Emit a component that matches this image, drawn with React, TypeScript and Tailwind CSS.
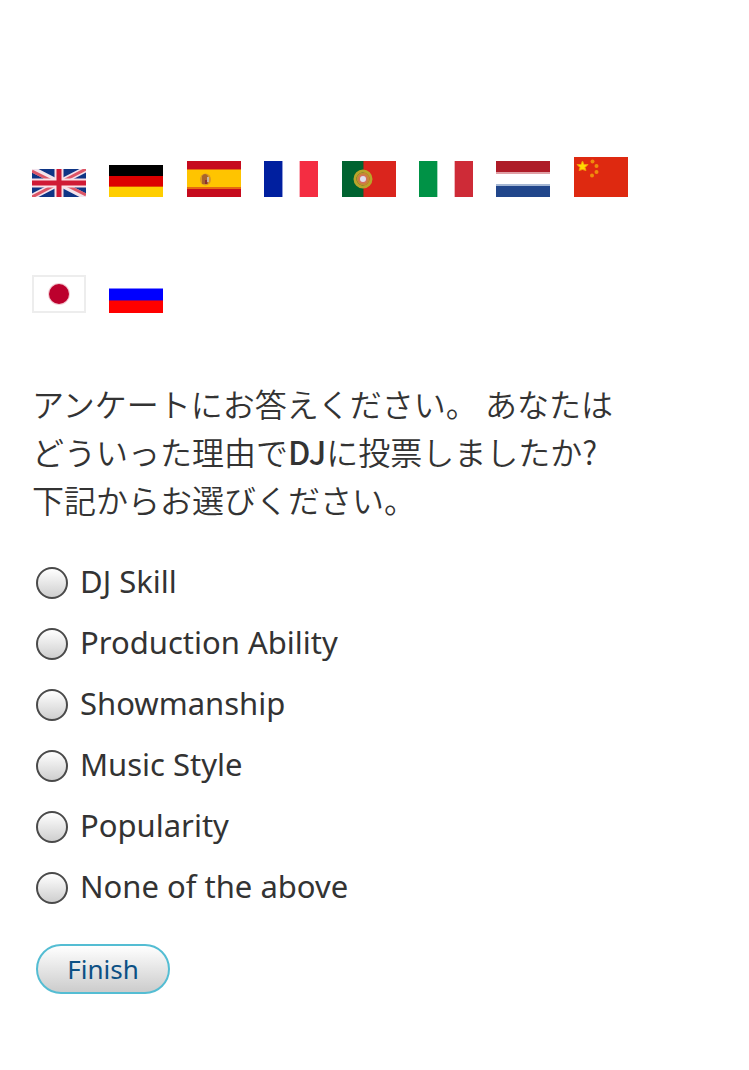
import type { ReactNode } from 'react';

const options = [
  'DJ Skill',
  'Production Ability',
  'Showmanship',
  'Music Style',
  'Popularity',
  'None of the above',
];

const flags: { name: string; height: number; art: ReactNode }[] = [
  {
    name: 'English',
    height: 28,
    art: (
      <>
        <rect width="54" height="28" fill="#0f3585" />
        <path d="M0 0 54 28M54 0 0 28" stroke="#f3e3ec" strokeWidth="6" />
        <path d="M0 2 20 12M54 26 34 16M54 0 33 11M0 28 21 17" stroke="#dc5566" strokeWidth="3" />
        <path d="M27 0V28M0 14H54" stroke="#fbe0e6" strokeWidth="9" />
        <path d="M27 0V28M0 14H54" stroke="#d01a35" strokeWidth="5" />
      </>
    ),
  },
  {
    name: 'Deutsch',
    height: 32,
    art: (
      <>
        <rect width="54" height="11" fill="#000" />
        <rect y="11" width="54" height="11" fill="#dd0000" />
        <rect y="21" width="54" height="1" fill="#e04a00" />
        <rect y="22" width="54" height="10" fill="#ffce00" />
      </>
    ),
  },
  {
    name: 'Español',
    height: 36,
    art: (
      <>
        <rect width="54" height="36" fill="#c60b1e" />
        <rect y="8" width="54" height="20" fill="#e66a10" />
        <rect y="9" width="54" height="17" fill="#ffc400" />
        <ellipse cx="18.5" cy="18.5" rx="5.5" ry="6" fill="#d99a22" />
        <path d="M15 15q3-4 6 0v8h-6z" fill="#a8642c" />
        <path d="M18 19h2v4h-2z" fill="#8a3030" />
        <path d="M20 16h2v5h-2z" fill="#cdb6a0" />
      </>
    ),
  },
  {
    name: 'Français',
    height: 36,
    art: (
      <>
        <rect width="54" height="36" fill="#fff" />
        <rect width="18" height="36" fill="#001f9f" />
        <rect x="18" width="1" height="36" fill="#8f9bd8" />
        <rect x="35" width="1" height="36" fill="#fbb3bd" />
        <rect x="36" width="18" height="36" fill="#f42d42" />
      </>
    ),
  },
  {
    name: 'Português',
    height: 36,
    art: (
      <>
        <rect width="54" height="36" fill="#da251d" />
        <rect width="21" height="36" fill="#006330" />
        <rect x="21" width="1" height="36" fill="#7c3a24" />
        <circle cx="21" cy="18" r="8" fill="none" stroke="#b9a52a" strokeWidth="3" />
        <circle cx="21" cy="18" r="6.5" fill="#c58a32" />
        <circle cx="21" cy="18" r="4.5" fill="#d5705c" />
        <circle cx="21" cy="18" r="3" fill="#dfe0ee" />
      </>
    ),
  },
  {
    name: 'Italiano',
    height: 36,
    art: (
      <>
        <rect width="54" height="36" fill="#fff" />
        <rect width="18" height="36" fill="#009246" />
        <rect x="18" width="1" height="36" fill="#a6d9bf" />
        <rect x="35" width="1" height="36" fill="#efb6bb" />
        <rect x="36" width="18" height="36" fill="#ce2b37" />
      </>
    ),
  },
  {
    name: 'Nederlands',
    height: 36,
    art: (
      <>
        <rect width="54" height="36" fill="#fff" />
        <rect width="54" height="11" fill="#ae1c28" />
        <rect y="11" width="54" height="2" fill="#dfa0a6" />
        <rect y="23" width="54" height="2" fill="#a5b7d3" />
        <rect y="25" width="54" height="11" fill="#21468b" />
      </>
    ),
  },
  {
    name: '中文',
    height: 40,
    art: (
      <>
        <rect width="54" height="40" fill="#de2910" />
        <path
          d="m8.5 4 1.5 3.500h4l-3 3 1 3-3.500-1-3.500 1 1-3-3-3h4z"
          fill="#ffdb00"
          stroke="#f49a08"
          strokeLinejoin="round"
        />
        <g fill="#f08c0c">
          <circle cx="18.5" cy="4.5" r="2" />
          <circle cx="22.5" cy="9" r="2" />
          <circle cx="22.5" cy="15" r="2" />
          <circle cx="18" cy="18.5" r="2" />
        </g>
      </>
    ),
  },
  {
    name: '日本語',
    height: 38,
    art: (
      <>
        <rect x="1" y="1" width="52" height="36" fill="#fff" stroke="#ededed" strokeWidth="2" />
        <circle cx="27" cy="19" r="11" fill="#f3cdd5" />
        <circle cx="27" cy="19" r="10" fill="#bc002d" />
      </>
    ),
  },
  {
    name: 'Русский',
    height: 36,
    art: (
      <>
        <rect width="54" height="36" fill="#fff" />
        <rect y="11" width="54" height="1" fill="#8080ff" />
        <rect y="12" width="54" height="12" fill="#0000ff" />
        <rect y="23" width="54" height="1" fill="#90006c" />
        <rect y="24" width="54" height="12" fill="#ff0000" />
      </>
    ),
  },
];

const App = () => {
  return (
    <main className="min-h-screen bg-white px-8 pt-[81px] pb-16 font-['Noto_Sans','Noto_Sans_CJK_JP',sans-serif] text-[#333333]">
      {/* Languages */}
      <nav className="grid w-full max-w-[619px] auto-rows-[116px] grid-cols-8 items-end">
        {flags.map((flag) => (
          <a key={flag.name} href="#" aria-label={flag.name} className="w-[54px]">
            <svg width="54" height={flag.height} viewBox={`0 0 54 ${flag.height}`} className="block">
              {flag.art}
            </svg>
          </a>
        ))}
      </nav>

      <form className="pt-[66px]" onSubmit={(e) => e.preventDefault()}>
        <fieldset>
          <legend
            lang="ja"
            className="max-w-[596px] font-['Noto_Sans_CJK_JP',sans-serif] text-[32px] leading-[48px] font-[350]"
          >
            アンケートにお答えください。 あなたはどういった理由で<span className="font-medium">DJ</span>
            に投票しましたか? 下記からお選びください。
          </legend>

          <div className="flex flex-col gap-[13px] pt-[34px] pl-1">
            {options.map((option) => (
              <label key={option} className="flex items-center gap-3 text-[31px] leading-[48px]">
                <input
                  type="radio"
                  name="reason"
                  value={option}
                  className="mt-1 size-8 shrink-0 appearance-none rounded-full border-2 border-[#4a4a4a] bg-linear-to-b from-white to-[#cfcfcf] checked:to-[#8a8a8a]"
                />
                {option}
              </label>
            ))}
          </div>
        </fieldset>

        <button
          type="submit"
          className="mt-[34px] ml-1 h-[50px] w-[134px] rounded-full border-2 border-[#54bdd3] bg-linear-to-b from-white to-[#cccccc] text-[26px] text-[#0c5084]"
        >
          Finish
        </button>
      </form>
    </main>
  );
};

export default App;
